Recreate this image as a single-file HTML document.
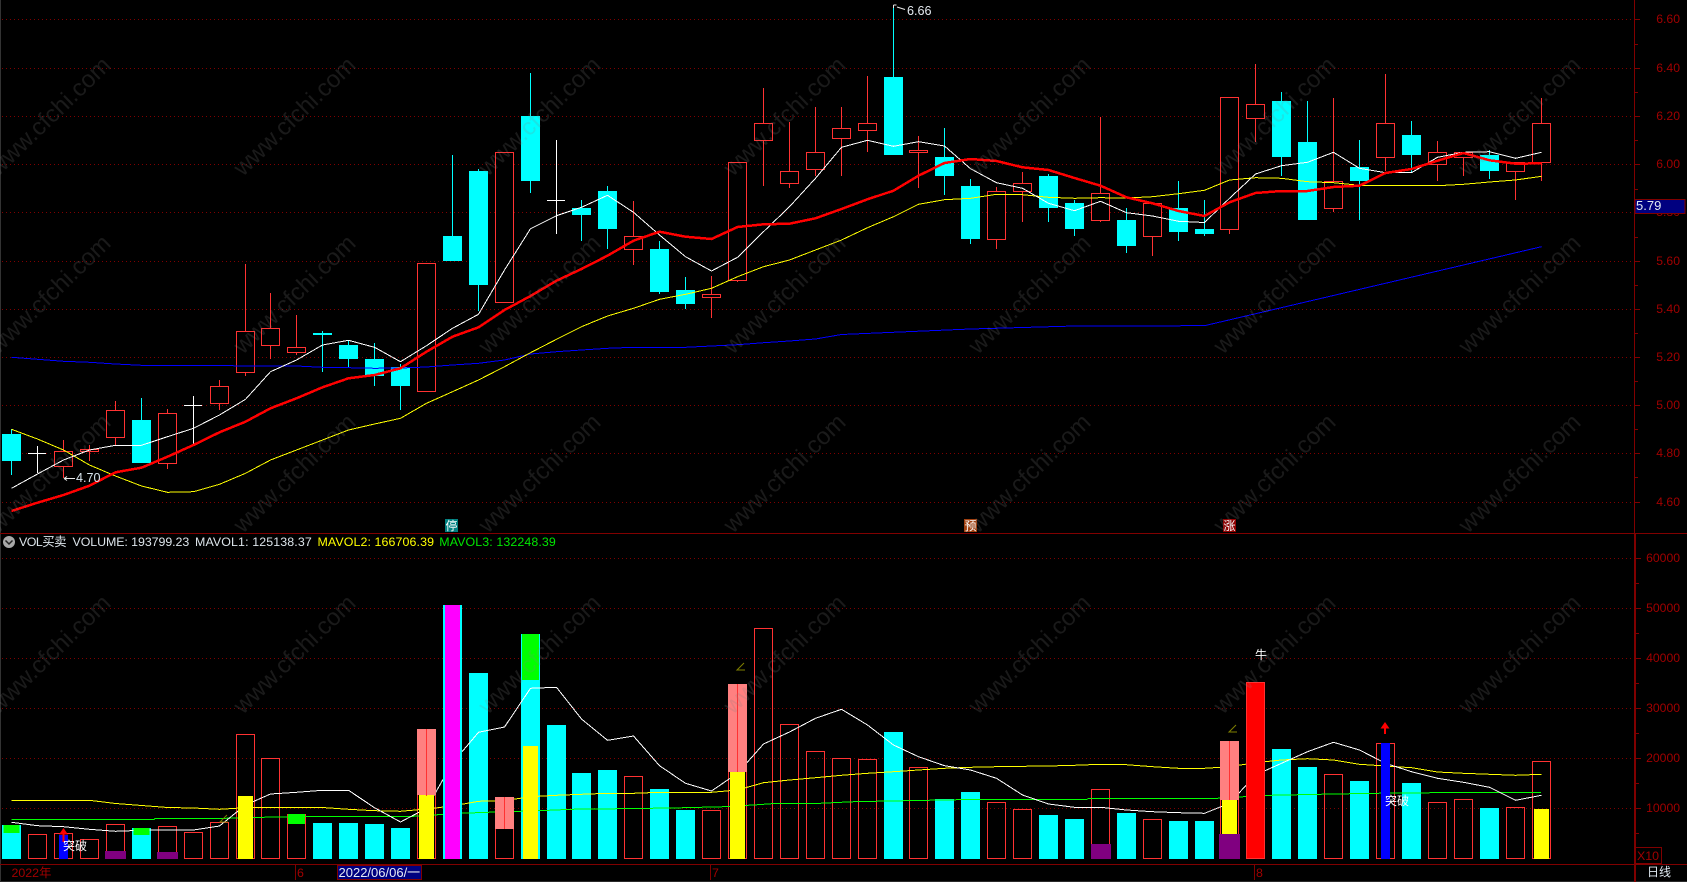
<!DOCTYPE html>
<html><head><meta charset="utf-8"><title>VOL</title>
<style>
html,body{margin:0;padding:0;background:#000;width:1687px;height:882px;overflow:hidden}
svg{display:block}
text{font-family:"Liberation Sans","Noto Sans CJK SC",sans-serif}
polyline{shape-rendering:crispEdges}
.g{stroke:#800000;stroke-width:1;stroke-dasharray:1 3;fill:none}
.ax{fill:#a00000;font-size:12.2px;text-anchor:end}
.w{stroke:#ff3232;stroke-width:1;fill:none}
.h{stroke:#ff3232;stroke-width:1;fill:#000}
.c{fill:#0ff}
.wm{fill:#808080;fill-opacity:.2;font-size:24px;text-anchor:middle}
</style></head><body>
<svg width="1687" height="882" viewBox="0 0 1687 882" xmlns="http://www.w3.org/2000/svg">
<rect width="1687" height="882" fill="#000"/>
<rect x="0" y="0" width="1" height="882" fill="#333"/>
<rect x="0" y="881" width="1687" height="1" fill="#2a2a2a"/>
<!-- grid -->
<path class="g" d="M2 19.5H1634M2 68.5H1634M2 116.5H1634M2 164.5H1634M2 212.5H1634M2 261.5H1634M2 309.5H1634M2 357.5H1634M2 405.5H1634M2 453.5H1634M2 502.5H1634M2 558.5H1634M2 608.5H1634M2 658.5H1634M2 708.5H1634M2 758.5H1634M2 808.5H1634"/>
<!-- frame -->
<g fill="#800000">
<rect x="0" y="533" width="1687" height="1"/>
<rect x="0" y="864" width="1687" height="1"/>
<rect x="1634" y="0" width="1" height="533"/>
<rect x="1634" y="533" width="2" height="349"/>
<rect x="295" y="864" width="1" height="16"/>
<rect x="710" y="864" width="1" height="16"/>
<rect x="1254" y="864" width="1" height="16"/>
</g>
<path stroke="#800000" fill="none" d="M1635 19.5h5M1635 68.5h5M1635 116.5h5M1635 164.5h5M1635 212.5h5M1635 261.5h5M1635 309.5h5M1635 357.5h5M1635 405.5h5M1635 453.5h5M1635 502.5h5M1635 44.5h3M1635 92.5h3M1635 140.5h3M1635 189.5h3M1635 237.5h3M1635 285.5h3M1635 333.5h3M1635 381.5h3M1635 429.5h3M1635 477.5h3M1636 558.5h5M1636 608.5h5M1636 658.5h5M1636 708.5h5M1636 758.5h5M1636 808.5h5M1636 583.5h3M1636 633.5h3M1636 683.5h3M1636 733.5h3M1636 783.5h3M1636 833.5h3"/>
<!-- axis labels -->
<text class="ax" x="1680" y="23">6.60</text>
<text class="ax" x="1680" y="72">6.40</text>
<text class="ax" x="1680" y="120">6.20</text>
<text class="ax" x="1680" y="168">6.00</text>
<text class="ax" x="1680" y="216">5.80</text>
<text class="ax" x="1680" y="265">5.60</text>
<text class="ax" x="1680" y="313">5.40</text>
<text class="ax" x="1680" y="361">5.20</text>
<text class="ax" x="1680" y="409">5.00</text>
<text class="ax" x="1680" y="457">4.80</text>
<text class="ax" x="1680" y="506">4.60</text>
<text class="ax" x="1680" y="562">60000</text>
<text class="ax" x="1680" y="612">50000</text>
<text class="ax" x="1680" y="662">40000</text>
<text class="ax" x="1680" y="712">30000</text>
<text class="ax" x="1680" y="762">20000</text>
<text class="ax" x="1680" y="812">10000</text>
<rect x="1635" y="199.5" width="50" height="14" fill="#000080" stroke="#800000"/>
<text x="1636" y="210" font-size="13" fill="#e0e8f0">5.79</text>
<rect x="1635.5" y="847.5" width="26" height="16" fill="none" stroke="#800000"/>
<text x="1637" y="860" font-size="12.4" fill="#a00000">X10</text>
<text x="1647" y="876" font-size="12" fill="#dde6ee">日线</text>

<!-- candle wicks red -->
<path class="w" d="M63.5 440V478M89.5 445V461M115.5 401V445M167.5 409V469M219.5 380V410M245.5 264V376M270.5 293V359M296.5 315V355M633.5 201V265M711.5 276V318M737.5 162V282M763.5 88V186M789.5 122V188M815.5 107V176M841.5 107V176M867.5 76V152M918.5 136V188M996.5 187V249M1022.5 172V222M1100.5 117V222M1152.5 203V256M1229.5 97V234M1255.5 64V142M1333.5 98V212M1385.5 74V171M1437.5 141V181M1463.5 152V176M1515.5 162V200M1541.5 98V181"/>
<!-- hollow red bodies -->
<g class="h">
<rect x="54.5" y="451.5" width="18" height="15"/>
<rect x="80.5" y="449.5" width="18" height="2"/>
<rect x="106.5" y="410.5" width="18" height="27"/>
<rect x="158.5" y="413.5" width="18" height="50"/>
<rect x="210.5" y="386.5" width="18" height="17"/>
<rect x="236.5" y="331.5" width="18" height="41"/>
<rect x="261.5" y="328.5" width="18" height="17"/>
<rect x="287.5" y="347.5" width="18" height="5"/>
<rect x="417.5" y="263.5" width="18" height="128"/>
<rect x="495.5" y="152.5" width="18" height="150"/>
<rect x="624.5" y="236.5" width="18" height="13"/>
<rect x="702.5" y="294.5" width="18" height="3"/>
<rect x="728.5" y="162.5" width="18" height="118"/>
<rect x="754.5" y="123.5" width="18" height="17"/>
<rect x="780.5" y="171.5" width="18" height="12"/>
<rect x="806.5" y="152.5" width="18" height="17"/>
<rect x="832.5" y="128.5" width="18" height="10"/>
<rect x="858.5" y="123.5" width="18" height="7"/>
<rect x="909.5" y="150.5" width="18" height="2"/>
<rect x="987.5" y="191.5" width="18" height="48"/>
<rect x="1013.5" y="183.5" width="18" height="8"/>
<rect x="1091.5" y="193.5" width="18" height="27"/>
<rect x="1143.5" y="203.5" width="18" height="33"/>
<rect x="1220.5" y="97.5" width="18" height="132"/>
<rect x="1246.5" y="104.5" width="18" height="14"/>
<rect x="1324.5" y="181.5" width="18" height="27"/>
<rect x="1376.5" y="123.5" width="18" height="34"/>
<rect x="1428.5" y="152.5" width="18" height="12"/>
<rect x="1454.5" y="152.5" width="18" height="5"/>
<rect x="1506.5" y="162.5" width="18" height="9"/>
<rect x="1532.5" y="123.5" width="18" height="39"/>
</g>
<!-- cyan candles -->
<path stroke="#0ff" fill="none" d="M11.5 429V475M141.5 398V420M322.5 331V372M348.5 340V367M374.5 343V386M400.5 364V410M452.5 155V236M478.5 169V311M530.5 73V193M581.5 200V241M607.5 186V249M659.5 241V294M685.5 277V309M893.5 5V77M944.5 128V195M970.5 179V244M1048.5 174V222M1074.5 200V236M1126.5 208V253M1178.5 181V241M1204.5 200V236M1281.5 92V176M1307.5 101V220M1359.5 140V220M1411.5 121V173M1489.5 150V179"/>
<g class="c">
<rect x="2" y="434" width="19" height="27"/>
<rect x="132" y="420" width="19" height="43"/>
<rect x="313" y="333" width="19" height="2"/>
<rect x="339" y="345" width="19" height="14"/>
<rect x="365" y="359" width="19" height="17"/>
<rect x="391" y="367" width="19" height="19"/>
<rect x="443" y="236" width="19" height="25"/>
<rect x="469" y="171" width="19" height="114"/>
<rect x="521" y="116" width="19" height="65"/>
<rect x="572" y="208" width="19" height="7"/>
<rect x="598" y="191" width="19" height="38"/>
<rect x="650" y="249" width="19" height="43"/>
<rect x="676" y="290" width="19" height="14"/>
<rect x="884" y="77" width="19" height="78"/>
<rect x="935" y="157" width="19" height="19"/>
<rect x="961" y="186" width="19" height="53"/>
<rect x="1039" y="176" width="19" height="32"/>
<rect x="1065" y="203" width="19" height="26"/>
<rect x="1117" y="220" width="19" height="26"/>
<rect x="1169" y="208" width="19" height="24"/>
<rect x="1195" y="229" width="19" height="5"/>
<rect x="1272" y="101" width="19" height="56"/>
<rect x="1298" y="142" width="19" height="78"/>
<rect x="1350" y="167" width="19" height="14"/>
<rect x="1402" y="135" width="19" height="20"/>
<rect x="1480" y="155" width="19" height="16"/>
</g>
<!-- white doji -->
<path stroke="#fff" fill="none" d="M37.5 446V473M28 453.5H46M193.5 396V444M184 405.5H202M556.5 140V234M547 200.5H565"/>

<!-- MA lines main -->
<polyline fill="none" stroke="#0000ff" points="11.5,357.3 37.5,359.3 63.5,361.3 89.5,362.3 115.5,364 141.5,365.3 219.5,365.7 296.5,366 322.5,367.3 348.5,367.7 374.5,368.3 400.5,368 426.5,367 452.5,365 478.5,363.3 504.5,360 530.5,354 556.5,351.7 581.5,350 607.5,348.3 633.5,347.3 685.5,347.3 711.5,346 737.5,344.7 763.5,342.7 789.5,341 815.5,339 841.5,334.5 970.5,329 1074.5,326 1204.5,325.7 1541.5,246.7"/>
<polyline fill="none" stroke="#ffff00" points="11.5,429.3 37.5,439 63.5,450 89.5,465 115.5,476 141.5,486 167.5,492.3 193.5,491.7 219.5,484.3 245.5,473.3 270.5,460 296.5,450 322.5,440 348.5,430 374.5,424 400.5,418.3 426.5,403.3 452.5,391.7 478.5,380 504.5,366.7 530.5,352.7 556.5,339.3 581.5,326.7 607.5,316 633.5,308.3 659.5,299.3 685.5,294.3 711.5,288.3 737.5,276.7 763.5,266.7 789.5,260 815.5,250 841.5,240 867.5,227.7 893.5,216.7 918.5,204.3 944.5,199.7 970.5,198.3 996.5,194.3 1022.5,194.7 1048.5,197.3 1074.5,198.3 1100.5,197.7 1126.5,198 1152.5,196.7 1178.5,193.7 1204.5,190.3 1229.5,180 1255.5,177.7 1281.5,178.3 1307.5,181.7 1333.5,182.7 1359.5,185.3 1385.5,185.7 1411.5,185.7 1437.5,185.7 1463.5,184.3 1489.5,182 1515.5,180 1541.5,176.3"/>
<polyline fill="none" stroke="#fff" points="11.5,488.3 37.5,474 63.5,460 89.5,450 115.5,445.3 141.5,445.3 167.5,436.7 193.5,428.3 219.5,415 245.5,399.3 270.5,371.7 296.5,360 322.5,345 348.5,340.3 374.5,347.3 400.5,361.7 426.5,345.7 452.5,328.3 478.5,314.3 504.5,270 530.5,228.7 556.5,215.7 581.5,207.3 607.5,195.3 633.5,212.3 659.5,235 685.5,256.7 711.5,271 737.5,257.3 763.5,231.7 789.5,206.7 815.5,178.3 841.5,147.3 867.5,140.3 893.5,146.3 918.5,141.7 944.5,146 970.5,168.7 996.5,182.7 1022.5,188.3 1048.5,203.3 1074.5,210.7 1100.5,201.3 1126.5,212.7 1152.5,216 1178.5,221.3 1204.5,222.5 1229.5,198.3 1255.5,174 1281.5,165.7 1307.5,162.3 1333.5,152.3 1359.5,168.3 1385.5,172.7 1411.5,172.7 1437.5,157.3 1463.5,152.3 1489.5,151.7 1515.5,158.3 1541.5,152.3"/>
<polyline fill="none" stroke="#ff0000" stroke-width="2.5" points="11.5,511 37.5,502.7 63.5,495 89.5,485.7 115.5,472.3 141.5,467.7 167.5,456.7 193.5,445 219.5,432.3 245.5,421.7 270.5,408.3 296.5,398.3 322.5,387.3 348.5,378.3 374.5,375 400.5,368.3 426.5,351.7 452.5,336.7 478.5,327.3 504.5,310 530.5,296 556.5,280.7 581.5,269 607.5,255.7 633.5,240.7 659.5,231.7 685.5,236.7 711.5,239 737.5,227 763.5,224.3 789.5,223.7 815.5,218.3 841.5,209 867.5,199.3 893.5,190.7 918.5,175.7 944.5,163 970.5,159 996.5,161 1022.5,167.3 1048.5,170 1074.5,178 1100.5,185.7 1126.5,197.3 1152.5,203.3 1178.5,211 1204.5,216 1229.5,202.3 1255.5,193 1281.5,191 1307.5,191 1333.5,187 1359.5,185.7 1385.5,173 1411.5,169 1437.5,160.7 1463.5,153 1489.5,160.3 1515.5,163.7 1541.5,163.3"/>

<!-- price labels -->
<path stroke="#e8e8e8" fill="none" d="M905 9.5L897 7M893.5 5h3M893.5 5v3M75 478.5H64M64 478.5l3-2M64 478.5l3 2"/>
<text x="907" y="15" font-size="12.6" fill="#e4eaf0">6.66</text>
<text x="76" y="482" font-size="12.6" fill="#d8e4ee">4.70</text>

<!-- badges -->
<rect x="445" y="519" width="13" height="13" fill="#008080"/>
<text x="445.5" y="530" font-size="12" fill="#fff">停</text>
<rect x="964" y="519" width="13" height="13" fill="#a04010"/>
<text x="964.5" y="530" font-size="12" fill="#fff">预</text>
<rect x="1223" y="519" width="13" height="13" fill="#900000"/>
<text x="1223.5" y="530" font-size="12" fill="#fff">涨</text>

<!-- header -->
<circle cx="9" cy="542" r="6" fill="#a8a8a8"/>
<path d="M5.5 540.5L9 544L12.5 540.5" fill="none" stroke="#222" stroke-width="1.5"/>
<g font-size="12.4">
<text x="19" y="546" fill="#dce4ea" textLength="47.5">VOL买卖</text>
<text x="72.5" y="546" fill="#dce4ea" textLength="116.8">VOLUME: 193799.23</text>
<text x="195" y="546" fill="#dce4ea" textLength="116.8">MAVOL1: 125138.37</text>
<text x="317.5" y="546" fill="#ffff00" textLength="116.5">MAVOL2: 166706.39</text>
<text x="439.3" y="546" fill="#00e600" textLength="116.5">MAVOL3: 132248.39</text>
</g>

<!-- volume cyan bars -->
<g class="c">
<rect x="2" y="825" width="19" height="34"/>
<rect x="132" y="828" width="19" height="31"/>
<rect x="313" y="823" width="19" height="36"/>
<rect x="339" y="823" width="19" height="36"/>
<rect x="365" y="824" width="19" height="35"/>
<rect x="391" y="828" width="19" height="31"/>
<rect x="469" y="673" width="19" height="186"/>
<rect x="521" y="634" width="19" height="225"/>
<rect x="547" y="725" width="19" height="134"/>
<rect x="572" y="773" width="19" height="86"/>
<rect x="598" y="770" width="19" height="89"/>
<rect x="650" y="789" width="19" height="70"/>
<rect x="676" y="810" width="19" height="49"/>
<rect x="884" y="732" width="19" height="127"/>
<rect x="935" y="799" width="19" height="60"/>
<rect x="961" y="792" width="19" height="67"/>
<rect x="1039" y="815" width="19" height="44"/>
<rect x="1065" y="819" width="19" height="40"/>
<rect x="1117" y="813" width="19" height="46"/>
<rect x="1169" y="821" width="19" height="38"/>
<rect x="1195" y="821" width="19" height="38"/>
<rect x="1272" y="749" width="19" height="110"/>
<rect x="1298" y="767" width="19" height="92"/>
<rect x="1350" y="781" width="19" height="78"/>
<rect x="1402" y="783" width="19" height="76"/>
<rect x="1480" y="808" width="19" height="51"/>
</g>
<!-- volume hollow red bars -->
<g class="w">
<rect x="28.5" y="834.5" width="18" height="24"/>
<rect x="54.5" y="833.5" width="18" height="25"/>
<rect x="80.5" y="839.5" width="18" height="19"/>
<rect x="106.5" y="824.5" width="18" height="34"/>
<rect x="158.5" y="826.5" width="18" height="32"/>
<rect x="184.5" y="832.5" width="18" height="26"/>
<rect x="210.5" y="822.5" width="18" height="36"/>
<rect x="236.5" y="734.5" width="18" height="124"/>
<rect x="261.5" y="758.5" width="18" height="100"/>
<rect x="287.5" y="814.5" width="18" height="44"/>
<rect x="417.5" y="729.5" width="18" height="129"/>
<rect x="495.5" y="797.5" width="18" height="61"/>
<rect x="624.5" y="776.5" width="18" height="82"/>
<rect x="702.5" y="810.5" width="18" height="48"/>
<rect x="728.5" y="684.5" width="18" height="174"/>
<rect x="754.5" y="628.5" width="18" height="230"/>
<rect x="780.5" y="724.5" width="18" height="134"/>
<rect x="806.5" y="751.5" width="18" height="107"/>
<rect x="832.5" y="758.5" width="18" height="100"/>
<rect x="858.5" y="759.5" width="18" height="99"/>
<rect x="909.5" y="767.5" width="18" height="91"/>
<rect x="987.5" y="802.5" width="18" height="56"/>
<rect x="1013.5" y="809.5" width="18" height="49"/>
<rect x="1091.5" y="789.5" width="18" height="69"/>
<rect x="1143.5" y="819.5" width="18" height="39"/>
<rect x="1220.5" y="741.5" width="18" height="117"/>
<rect x="1246.5" y="682.5" width="18" height="176"/>
<rect x="1324.5" y="774.5" width="18" height="84"/>
<rect x="1376.5" y="743.5" width="18" height="115"/>
<rect x="1428.5" y="802.5" width="18" height="56"/>
<rect x="1454.5" y="799.5" width="18" height="59"/>
<rect x="1506.5" y="807.5" width="18" height="51"/>
<rect x="1532.5" y="761.5" width="18" height="97"/>
</g>

<!-- volume MA lines -->
<polyline fill="none" stroke="#00ff00" points="11.5,819.7 154,819.7 155,818.7 225,818.3 261,817.3 309,816.7 413,816.3 460,813.3 496,812 540,810.7 570,809.3 620,808.7 672,808 724,806.7 758,804.7 777,803.3 820,803.3 854,801.7 906,800.7 959,799.7 1087,799.3 1089,798.3 1217,798.3 1244,796.7 1270,795.3 1319,794.3 1374,793.3 1476,792.3 1541,792.3"/>
<polyline fill="none" stroke="#ffff00" points="11.5,800.3 89.5,800.3 115.5,803.5 141.5,805.5 167.5,807.5 193.5,808 219.5,809.3 245.5,807.7 270.5,807.5 296.5,807.3 322.5,807.5 348.5,809.3 374.5,810.7 400.5,811.3 426.5,809 452.5,806 478.5,801.3 504.5,800.7 530.5,796.7 556.5,795.3 581.5,794.3 607.5,793.3 633.5,793.3 659.5,792.3 711.5,792.3 737.5,790 763.5,782.7 789.5,780 815.5,777.7 841.5,775.3 867.5,773.3 893.5,771.7 918.5,770 944.5,768.3 970.5,767.3 996.5,766.7 1022.5,766.3 1048.5,766 1074.5,765.3 1100.5,764.3 1126.5,764.7 1152.5,766.7 1178.5,768.3 1204.5,768.3 1229.5,766.7 1255.5,762.7 1281.5,760 1307.5,758.7 1333.5,760 1359.5,764.3 1385.5,766 1411.5,767.7 1437.5,772 1463.5,773.3 1489.5,774.3 1515.5,775.3 1541.5,774.3"/>
<polyline fill="none" stroke="#fff" points="11.5,822.3 37.5,825.7 63.5,826.7 89.5,829.3 115.5,831.3 141.5,830.3 167.5,830 193.5,830 219.5,826 245.5,805 270.5,794 296.5,792.3 322.5,790.3 348.5,790.3 374.5,807.7 400.5,822 426.5,808.3 452.5,763 478.5,732.3 504.5,727 530.5,688.3 556.5,687.3 581.5,719 607.5,740.3 633.5,736 659.5,765.7 685.5,783.3 711.5,791 737.5,773.3 763.5,744 789.5,732 815.5,718.3 841.5,709.3 867.5,725 893.5,745 918.5,756.7 944.5,765.7 970.5,770 996.5,778.3 1022.5,795 1048.5,804 1074.5,807.3 1100.5,807.3 1126.5,810 1152.5,811.7 1178.5,812.7 1204.5,813.3 1229.5,803.3 1255.5,775 1281.5,763.3 1307.5,751.7 1333.5,742.3 1359.5,750 1385.5,763.3 1411.5,771.7 1437.5,778.3 1463.5,782.3 1489.5,787.3 1515.5,800.3 1541.5,795.3"/>

<!-- filled volume overlays -->
<rect x="3.5" y="825" width="16" height="8" fill="#00ff00"/>
<rect x="133.5" y="828" width="16" height="7" fill="#00ff00"/>
<rect x="288" y="814" width="17" height="10" fill="#00ff00"/>
<rect x="522" y="634" width="17" height="46" fill="#00ff00"/>
<rect x="105" y="851" width="21" height="8" fill="#800080"/>
<rect x="157" y="852" width="21" height="7" fill="#800080"/>
<rect x="1091" y="844" width="20" height="15" fill="#800080"/>
<rect x="238" y="796" width="15" height="63" fill="#ffff00"/>
<rect x="417" y="729" width="19" height="66" fill="#ff8080"/>
<rect x="419" y="795" width="15" height="64" fill="#ffff00"/>
<rect x="443" y="605" width="19" height="254" fill="#0ff"/>
<rect x="445" y="605" width="15" height="254" fill="#ff00ff"/>
<rect x="495" y="797" width="19" height="32" fill="#ff8080"/>
<rect x="523" y="746" width="15" height="113" fill="#ffff00"/>
<rect x="728" y="684" width="19" height="88" fill="#ff8080"/>
<rect x="730" y="772" width="15" height="87" fill="#ffff00"/>
<rect x="1220" y="741" width="19" height="59" fill="#ff8080"/>
<rect x="1222" y="800" width="15" height="34" fill="#ffff00"/>
<rect x="1219" y="834" width="21" height="25" fill="#800080"/>
<rect x="1246.5" y="682.5" width="18" height="176" fill="#ff0000" stroke="#ff3232"/>
<rect x="1381" y="743" width="9" height="116" fill="#0000ff"/>
<rect x="1534" y="809" width="15" height="50" fill="#ffff00"/>
<rect x="59" y="835" width="9" height="24" fill="#0000ff"/>
<path stroke="#ff3232" fill="none" d="M426.5 729V796M504.5 797V829M737.5 684V772M1229.5 741V800"/>
<!-- arrows -->
<path fill="#ff0000" d="M63.5 828L68 834.5H59ZM62.5 834h2v8h-2ZM1385 722L1389.5 728.5H1380.5ZM1384 728h2v6h-2Z"/>
<!-- small angle marks -->
<path fill="none" stroke="#808000" d="M744 663L737 670H745M1236 725L1229 732H1237M227 815L220 822H228"/>
<!-- signal text -->
<text x="63" y="850" font-size="12" fill="#fff">突破</text>
<text x="1385" y="805" font-size="12" fill="#fff">突破</text>
<text x="1255" y="659" font-size="12" fill="#fff">牛</text>

<!-- time axis -->
<text x="11.5" y="877" font-size="12.4" fill="#a00000">2022年</text>
<text x="297" y="877" font-size="12.4" fill="#a00000">6</text>
<text x="712" y="877" font-size="12.4" fill="#a00000">7</text>
<text x="1256" y="877" font-size="12.4" fill="#a00000">8</text>
<rect x="337.5" y="865.5" width="84" height="14" fill="#000080" stroke="#800000"/>
<text x="338.5" y="877" font-size="13" fill="#e8ecf4">2022/06/06/一</text>

<!-- watermark -->
<text class="wm" transform="translate(55 122) rotate(-44)">www.cfchi.com</text>
<text class="wm" transform="translate(300 122) rotate(-44)">www.cfchi.com</text>
<text class="wm" transform="translate(545 122) rotate(-44)">www.cfchi.com</text>
<text class="wm" transform="translate(790 122) rotate(-44)">www.cfchi.com</text>
<text class="wm" transform="translate(1035 122) rotate(-44)">www.cfchi.com</text>
<text class="wm" transform="translate(1280 122) rotate(-44)">www.cfchi.com</text>
<text class="wm" transform="translate(1525 122) rotate(-44)">www.cfchi.com</text>
<text class="wm" transform="translate(55 300) rotate(-44)">www.cfchi.com</text>
<text class="wm" transform="translate(300 300) rotate(-44)">www.cfchi.com</text>
<text class="wm" transform="translate(545 300) rotate(-44)">www.cfchi.com</text>
<text class="wm" transform="translate(790 300) rotate(-44)">www.cfchi.com</text>
<text class="wm" transform="translate(1035 300) rotate(-44)">www.cfchi.com</text>
<text class="wm" transform="translate(1280 300) rotate(-44)">www.cfchi.com</text>
<text class="wm" transform="translate(1525 300) rotate(-44)">www.cfchi.com</text>
<text class="wm" transform="translate(55 479) rotate(-44)">www.cfchi.com</text>
<text class="wm" transform="translate(300 479) rotate(-44)">www.cfchi.com</text>
<text class="wm" transform="translate(545 479) rotate(-44)">www.cfchi.com</text>
<text class="wm" transform="translate(790 479) rotate(-44)">www.cfchi.com</text>
<text class="wm" transform="translate(1035 479) rotate(-44)">www.cfchi.com</text>
<text class="wm" transform="translate(1280 479) rotate(-44)">www.cfchi.com</text>
<text class="wm" transform="translate(1525 479) rotate(-44)">www.cfchi.com</text>
<text class="wm" transform="translate(55 660) rotate(-44)">www.cfchi.com</text>
<text class="wm" transform="translate(300 660) rotate(-44)">www.cfchi.com</text>
<text class="wm" transform="translate(545 660) rotate(-44)">www.cfchi.com</text>
<text class="wm" transform="translate(790 660) rotate(-44)">www.cfchi.com</text>
<text class="wm" transform="translate(1035 660) rotate(-44)">www.cfchi.com</text>
<text class="wm" transform="translate(1280 660) rotate(-44)">www.cfchi.com</text>
<text class="wm" transform="translate(1525 660) rotate(-44)">www.cfchi.com</text>
</svg>
</body></html>
